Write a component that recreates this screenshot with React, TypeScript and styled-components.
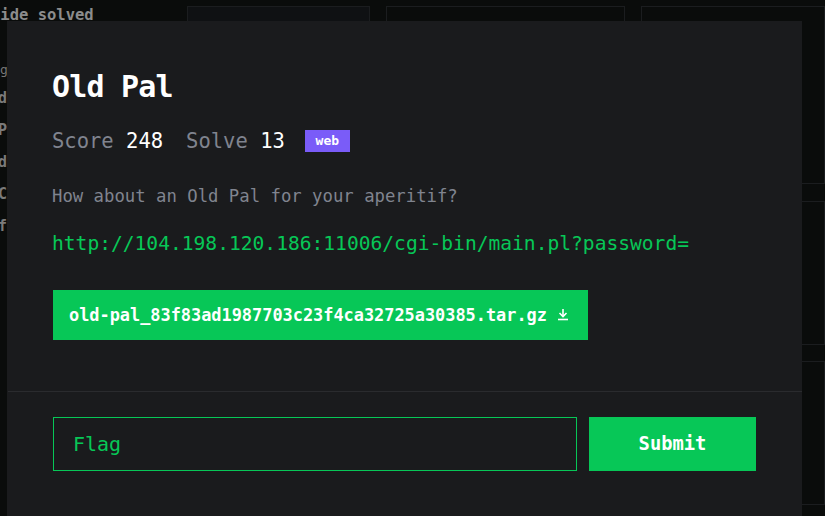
import React from "react";
import styled, { createGlobalStyle } from "styled-components";

const GREEN = "#07c757";
const MONO = `"DejaVu Sans Mono", "Liberation Mono", monospace`;

const Global = createGlobalStyle`
  html, body { margin: 0; padding: 0; background: #0a0c0b; overflow: hidden; }
  * { box-sizing: border-box; }
`;

const Screen = styled.div`
  position: relative;
  width: 825px;
  height: 516px;
  overflow: hidden;
  background: #0a0c0b;
  font-family: ${MONO};
`;

const Page = styled.div`
  display: flex;
  align-items: flex-start;
  padding-top: 6px;
`;

const Sidebar = styled.div`
  flex: 0 0 196px;
  margin-left: -9px;
  display: flex;
  flex-direction: column;
  color: #8a8a8a;
`;

const HideSolved = styled.div`
  font-size: 15.5px;
  line-height: 18px;
  font-weight: 700;
  color: #8c8c8c;
`;

const SideHeading = styled.div`
  margin-top: 34px;
  padding-left: 9px;
  font-size: 13px;
  line-height: 24px;
  color: #777;
`;

const SideItem = styled.div`
  padding-left: 7px;
  font-size: 15px;
  line-height: 32px;
  font-weight: 700;
  color: #7a7a7a;
`;

const CardGrid = styled.div`
  display: grid;
  grid-template-columns: 183px 239px 184px;
  grid-template-rows: 178px 144px 144px;
  column-gap: 16px;
  row-gap: 16.5px;
`;

const Card = styled.div<{ $lit?: boolean }>`
  border: 1px solid #1b1d1f;
  background: ${(p) => (p.$lit ? "#0f1113" : "#0a0c0b")};
`;

const Modal = styled.div`
  position: absolute;
  top: 21px;
  left: 7px;
  width: 795px;
  background: #1a1b1d;
  display: flex;
  flex-direction: column;
  font-family: ${MONO};
`;

const Upper = styled.div`
  display: flex;
  flex-direction: column;
  align-items: flex-start;
  padding: 48px 46px 51px 45px;
`;

const Title = styled.h1`
  margin: 0;
  font-size: 30px;
  line-height: 36px;
  font-weight: 700;
  letter-spacing: -0.8px;
  color: #ffffff;
`;

const StatsRow = styled.div`
  display: flex;
  align-items: center;
  height: 24px;
  margin-top: 24.4px;
  font-size: 20.5px;
  line-height: 24px;
`;

const StatLabel = styled.span`
  color: #80848f;
`;

const StatValue = styled.span<{ $gap?: number }>`
  color: #ffffff;
  margin-right: ${(p) => p.$gap ?? 0}px;
`;

const Tag = styled.span`
  display: inline-flex;
  align-items: center;
  justify-content: center;
  width: 45px;
  height: 22px;
  background: #7a5cf8;
  color: #ffffff;
  font-size: 13px;
  font-weight: 700;
`;

const Description = styled.p`
  margin: 31.4px 0 0;
  font-size: 17.3px;
  line-height: 22px;
  color: #80848f;
`;

const Link = styled.a`
  margin-top: 25px;
  font-size: 19.6px;
  line-height: 24px;
  color: ${GREEN};
  text-decoration: none;
`;

const Download = styled.a`
  margin-top: 34px;
  margin-left: 1px;
  display: flex;
  align-items: center;
  gap: 10px;
  height: 50px;
  width: 535px;
  padding: 0 18px 0 16px;
  background: ${GREEN};
  color: #ffffff;
  font-size: 16.9px;
  font-weight: 700;
  text-decoration: none;
`;

const Divider = styled.hr`
  margin: 0 0 0 1px;
  border: 0;
  border-top: 1px solid #2a2b2e;
`;

const Footer = styled.form`
  display: flex;
  gap: 12px;
  padding: 25px 46px 46px 46px;
`;

const FlagInput = styled.input`
  flex: 1;
  height: 54px;
  padding: 0 19px;
  background: transparent;
  border: 1px solid ${GREEN};
  outline: none;
  font-family: ${MONO};
  font-size: 20px;
  color: ${GREEN};
  &::placeholder { color: ${GREEN}; opacity: 1; }
`;

const Submit = styled.button`
  flex: 0 0 167px;
  height: 54px;
  border: 0;
  background: ${GREEN};
  color: #ffffff;
  font-family: ${MONO};
  font-size: 18.8px;
  font-weight: 700;
`;

const DownloadIcon = () => (
  <svg width="12" height="13" viewBox="0 0 12 13" fill="none" stroke="#ffffff" strokeWidth="1.6">
    <path d="M6 1v7" />
    <path d="M2.5 5l3.5 3.5L9.5 5" />
    <path d="M1 11.5h10" />
  </svg>
);

export default function App() {
  return (
    <Screen>
      <Global />
      <Page>
        <Sidebar>
          <HideSolved>Hide solved</HideSolved>
          <SideHeading>genre</SideHeading>
          <SideItem>design</SideItem>
          <SideItem>Pwnable</SideItem>
          <SideItem>deploy</SideItem>
          <SideItem>Crypto</SideItem>
          <SideItem>file</SideItem>
        </Sidebar>
        <CardGrid>
          <Card $lit />
          <Card />
          <Card />
          <Card />
          <Card />
          <Card />
          <Card />
          <Card />
          <Card />
        </CardGrid>
      </Page>
      <Modal>
        <Upper>
          <Title>Old Pal</Title>
          <StatsRow>
            <StatLabel>Score&nbsp;</StatLabel>
            <StatValue $gap={23}>248</StatValue>
            <StatLabel>Solve&nbsp;</StatLabel>
            <StatValue $gap={20}>13</StatValue>
            <Tag>web</Tag>
          </StatsRow>
          <Description>How about an Old Pal for your aperitif?</Description>
          <Link href="#">http://104.198.120.186:11006/cgi-bin/main.pl?password=</Link>
          <Download href="#">
            <span>old-pal_83f83ad1987703c23f4ca32725a30385.tar.gz</span>
            <DownloadIcon />
          </Download>
        </Upper>
        <Divider />
        <Footer onSubmit={(e) => e.preventDefault()}>
          <FlagInput placeholder="Flag" />
          <Submit type="submit">Submit</Submit>
        </Footer>
      </Modal>
    </Screen>
  );
}
